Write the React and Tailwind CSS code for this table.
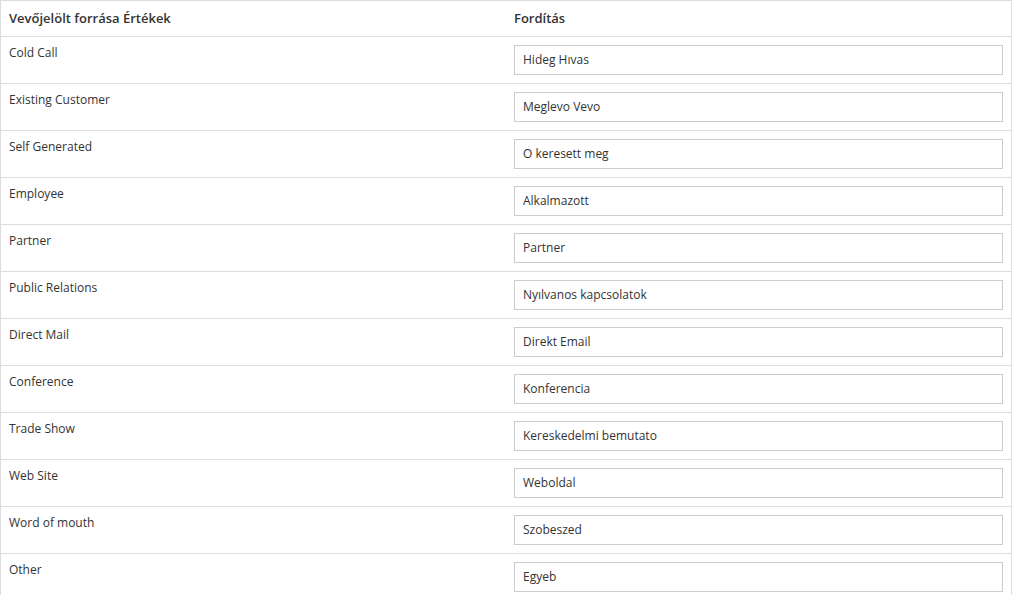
import React from 'react';

const rows = [
  ['Cold Call', 'Hideg Hıvas'],
  ['Existing Customer', 'Meglevo Vevo'],
  ['Self Generated', 'O keresett meg'],
  ['Employee', 'Alkalmazott'],
  ['Partner', 'Partner'],
  ['Public Relations', 'Nyılvanos kapcsolatok'],
  ['Direct Mail', 'Direkt Email'],
  ['Conference', 'Konferencia'],
  ['Trade Show', 'Kereskedelmi bemutato'],
  ['Web Site', 'Weboldal'],
  ['Word of mouth', 'Szobeszed'],
  ['Other', 'Egyeb'],
];

const App = () => {
  return (
    <div className="bg-white w-[1012px] font-['Open_Sans',sans-serif] text-[12px] text-[#333]">
      <table className="w-full border-collapse border border-[#ddd] table-fixed">
        <thead>
          <tr className="border-b border-[#ddd]">
            <th className="w-1/2 px-2 py-2 text-left text-[13px] font-semibold leading-[19px]">
              Vevőjelölt forrása Értékek
            </th>
            <th className="w-1/2 px-2 py-2 text-left text-[13px] font-semibold leading-[19px]">Fordítás</th>
          </tr>
        </thead>
        <tbody>
          {rows.map(([src, tr], idx) => (
            <tr key={idx} className="border-b border-[#ddd]">
              <td className="px-2 pt-[7px] pb-2 align-top leading-[17px]">{src}</td>
              <td className="px-2 py-2 align-top">
                <input
                  type="text"
                  defaultValue={tr}
                  className="block w-full h-[30px] px-2 pb-px border border-[#ccc] bg-white text-[12px] text-[#333] outline-none"
                />
              </td>
            </tr>
          ))}
        </tbody>
      </table>
    </div>
  );
};

export default App;
